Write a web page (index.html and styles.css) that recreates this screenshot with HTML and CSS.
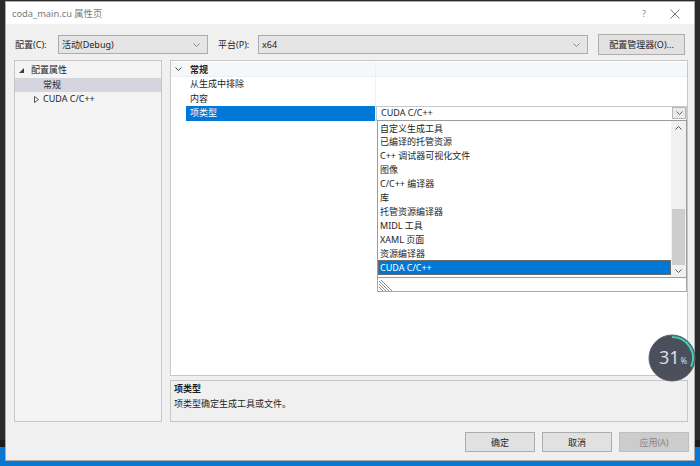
FILE: index.html
```html
<!DOCTYPE html>
<html lang="zh-CN">
<head>
<meta charset="utf-8">
<title>coda_main.cu 属性页</title>
<link rel="stylesheet" href="styles.css">
</head>
<body>
<div class="desktop">
  <div class="desk-top"></div>
  <div class="taskbar"></div>

  <div class="window">
    <div class="titlebar">
      <span class="title">coda_main.cu 属性页</span>
      <span class="tb-btns">
        <span class="help">?</span>
        <svg class="close" width="10" height="10" viewBox="0 0 10 10"><path d="M0.5 0.5 L9.5 9.5 M9.5 0.5 L0.5 9.5" stroke="#7a7a7a" stroke-width="1" fill="none"/></svg>
      </span>
    </div>

    <div class="toolbar">
      <span class="lbl lbl-config">配置(C):</span>
      <div class="combo combo-config">
        <span>活动(Debug)</span>
        <svg class="chev" width="7" height="4" viewBox="0 0 7 4"><polyline points="0.5,0.5 3.5,3.5 6.5,0.5" fill="none" stroke="#8a8a8a" stroke-width="1"/></svg>
      </div>
      <span class="lbl lbl-platform">平台(P):</span>
      <div class="combo combo-platform">
        <span>x64</span>
        <svg class="chev" width="7" height="4" viewBox="0 0 7 4"><polyline points="0.5,0.5 3.5,3.5 6.5,0.5" fill="none" stroke="#8a8a8a" stroke-width="1"/></svg>
      </div>
      <div class="btn btn-mgr">配置管理器(O)...</div>
    </div>

    <div class="main">
      <div class="tree">
        <div class="tree-row lvl0">
          <svg class="tri" width="5" height="5" viewBox="0 0 5 5"><polygon points="5,0 5,5 0,5" fill="#3c3c3c"/></svg>
          <span>配置属性</span>
        </div>
        <div class="tree-row lvl1 selected"><span>常规</span></div>
        <div class="tree-row lvl1 collapsed">
          <svg class="tri-open" width="5" height="7" viewBox="0 0 5 7"><polygon points="0.5,0.5 4.5,3.5 0.5,6.5" fill="none" stroke="#555" stroke-width="1"/></svg>
          <span>CUDA C/C++</span>
        </div>
      </div>

      <div class="right">
        <div class="grid">
          <div class="row header">
            <span class="gutter"><svg width="7" height="4" viewBox="0 0 7 4"><polyline points="0.5,0.5 3.5,3.5 6.5,0.5" fill="none" stroke="#444" stroke-width="1"/></svg></span>
            <span class="name bold">常规</span>
          </div>
          <div class="row">
            <span class="gutter"></span>
            <span class="name">从生成中排除</span>
            <span class="value"></span>
          </div>
          <div class="row">
            <span class="gutter"></span>
            <span class="name">内容</span>
            <span class="value"></span>
          </div>
          <div class="row">
            <span class="gutter"></span>
            <span class="name sel">项类型</span>
            <div class="value edit">
              <span class="edit-text">CUDA C/C++</span>
              <span class="dd-btn"><svg width="7" height="4" viewBox="0 0 7 4"><polyline points="0.5,0.5 3.5,3.5 6.5,0.5" fill="none" stroke="#666" stroke-width="1"/></svg></span>
              <div class="dropdown">
                <div class="dd-list">
                  <div class="dd-items">
                    <div class="dd-item">自定义生成工具</div>
                    <div class="dd-item">已编译的托管资源</div>
                    <div class="dd-item">C++ 调试器可视化文件</div>
                    <div class="dd-item">图像</div>
                    <div class="dd-item">C/C++ 编译器</div>
                    <div class="dd-item">库</div>
                    <div class="dd-item">托管资源编译器</div>
                    <div class="dd-item">MIDL 工具</div>
                    <div class="dd-item">XAML 页面</div>
                    <div class="dd-item">资源编译器</div>
                    <div class="dd-item active">CUDA C/C++</div>
                  </div>
                  <div class="dd-scroll">
                    <svg class="sb-arrow" width="7" height="4" viewBox="0 0 7 4"><polyline points="0.5,3.5 3.5,0.5 6.5,3.5" fill="none" stroke="#555" stroke-width="1"/></svg>
                    <div class="sb-track"><div class="sb-thumb"></div></div>
                    <svg class="sb-arrow" width="7" height="4" viewBox="0 0 7 4"><polyline points="0.5,0.5 3.5,3.5 6.5,0.5" fill="none" stroke="#555" stroke-width="1"/></svg>
                  </div>
                </div>
                <div class="dd-grip">
                  <svg width="14" height="11" viewBox="0 0 14 11">
                    <g stroke="#8a8a8a" stroke-width="1">
                      <line x1="0" y1="1" x2="10" y2="11"/>
                      <line x1="0" y1="4" x2="7" y2="11"/>
                      <line x1="0" y1="7" x2="4" y2="11"/>
                      <line x1="2" y1="0" x2="13" y2="11"/>
                    </g>
                  </svg>
                </div>
              </div>
            </div>
          </div>
        </div>
        <div class="desc">
          <div class="bold">项类型</div>
          <div>项类型确定生成工具或文件。</div>
        </div>
      </div>
    </div>

    <div class="footer">
      <div class="btn">确定</div>
      <div class="btn">取消</div>
      <div class="btn disabled">应用(A)</div>
    </div>
  </div>

  <div class="progress">
    <svg width="48" height="48" viewBox="0 0 48 48">
      <circle cx="24" cy="24" r="23" fill="#4a4f5b" stroke="#5c616c" stroke-width="1"/>
      <path d="M24 3 A21 21 0 0 1 43.1 32.7" fill="none" stroke="#3fd0b2" stroke-width="2"/>
    </svg>
    <span class="pct"><span class="num">31</span><span class="sign">%</span></span>
  </div>
</div>
</body>
</html>
```

FILE: styles.css
```css
* { box-sizing: border-box; }
html, body { margin: 0; padding: 0; }
body {
  width: 700px;
  height: 466px;
  overflow: hidden;
  font-family: "Noto Sans", "Noto Sans CJK SC", sans-serif;
  font-size: 9px;
  color: #1e1e1e;
  background: #262626;
}

.desktop {
  position: relative;
  width: 700px;
  height: 466px;
  display: flex;
  flex-direction: column;
}
.desk-top {
  flex: 1;
  background: linear-gradient(to bottom, #2b2b2b 0, #2b2b2b 440px, #1c1c1c 440px);
}
.taskbar {
  height: 19px;
  background: #0a78d2;
}

/* window */
.window {
  position: absolute;
  left: 5px;
  top: 1px;
  width: 690px;
  height: 460px;
  background: #f0f0f0;
  border: 1px solid #a9a9a9;
  display: flex;
  flex-direction: column;
}
.titlebar {
  height: 22px;
  background: #fff;
  display: flex;
  align-items: center;
  padding: 1px 14px 0 6px;
  line-height: 14px;
}
.title { color: #7a7a7a; font-size: 9.3px; }
.tb-btns {
  margin-left: auto;
  display: flex;
  align-items: center;
  gap: 24px;
}
.help { color: #8a8a8a; font-size: 9px; }

/* toolbar */
.toolbar {
  margin-top: 10px;
  height: 21px;
  display: flex;
  align-items: center;
  padding-left: 9px;
}
.lbl { white-space: nowrap; }
.lbl-config { width: 43px; }
.lbl-platform { width: 40px; margin-left: 10px; }
.combo {
  height: 19px;
  background: #e5e5e5;
  border: 1px solid #acacac;
  display: flex;
  align-items: center;
  padding: 0 7px 0 3px;
}
.combo .chev { margin-left: auto; }
.combo-config { width: 150px; }
.combo-platform { width: 330px; }
.btn {
  height: 20px;
  width: 70px;
  background: #e1e1e1;
  border: 1px solid #adadad;
  display: flex;
  align-items: center;
  justify-content: center;
}
.btn-mgr { width: 87px; height: 21px; margin-left: 10px; }
.btn.disabled { background: #cccccc; border-color: #bfbfbf; color: #838383; }

/* main area */
.main {
  margin-top: 5px;
  height: 362px;
  display: flex;
  gap: 8px;
  padding: 0 6px 0 8px;
}
.tree {
  width: 148px;
  background: #f4f4f4;
  border: 1px solid #c7c7c7;
  padding-top: 2px;
}
.tree-row {
  height: 14.5px;
  line-height: 14.5px;
  display: flex;
  align-items: center;
  white-space: nowrap;
}
.tree-row.lvl0 { padding-left: 4px; }
.tree-row.lvl0 .tri { margin-right: 7px; margin-top: 1px; }
.tree-row.lvl1 { padding-left: 28px; }
.tree-row.collapsed { padding-left: 19px; }
.tree-row.collapsed .tri-open { margin-right: 4px; }
.tree-row.selected { background: #d4d5de; }

.right {
  flex: 1;
  display: flex;
  flex-direction: column;
  gap: 4px;
}
.grid {
  height: 316px;
  background: #fff;
  border: 1px solid #c7c7c7;
  padding-top: 1px;
}
.row {
  display: flex;
  height: 14.5px;
  line-height: 14.5px;
  white-space: nowrap;
}
.row.header {
  height: 15px;
  line-height: 15px;
  background: #f6f7f9;
  border-bottom: 1px solid #eceef2;
}
.gutter {
  width: 15px;
  display: flex;
  align-items: center;
  justify-content: flex-start;
  padding-left: 4px;
}
.name {
  width: 190px;
  padding-left: 4px;
  border-right: 1px solid #f0f0f0;
}
.name.sel { background: #0078d7; color: #fff; }
.bold { font-weight: bold; }
.value { flex: 1; }
.value.edit {
  position: relative;
  display: flex;
  align-items: center;
  border: 1px solid #c9c9c9;
  padding-left: 4px;
}
.dd-btn {
  margin-left: auto;
  width: 14px;
  height: 12px;
  background: #eaeaea;
  border: 1px solid #b8b8b8;
  display: flex;
  align-items: center;
  justify-content: center;
}

/* dropdown popup */
.dropdown {
  position: absolute;
  top: 100%;
  left: 0;
  width: 310px;
  z-index: 5;
}
.dd-list {
  display: flex;
  height: 158px;
  background: #fff;
  border: 1px solid #9c9c9c;
}
.dd-items {
  flex: 1;
  padding-top: 1px;
}
.dd-item {
  height: 13.9px;
  line-height: 13.9px;
  padding-left: 2px;
  white-space: nowrap;
}
.dd-item.active {
  background: #0078d7;
  color: #fff;
  height: 15px;
  line-height: 13px;
  padding-left: 1px;
  border: 1px solid #6b6b6b;
}
.dd-scroll {
  width: 15px;
  background: #f0f0f0;
  display: flex;
  flex-direction: column;
  align-items: center;
  padding: 5px 0 4px;
}
.sb-track {
  flex: 1;
  width: 100%;
  display: flex;
  flex-direction: column;
  justify-content: flex-end;
  padding: 0 1px 4px;
}
.sb-thumb {
  height: 56px;
  background: #cdcdcd;
}
.dd-grip {
  height: 14px;
  background: #fff;
  border: 1px solid #a8a8a8;
  border-top: none;
  padding: 2px 0 0 1px;
  display: flex;
  align-items: flex-end;
}
.dd-grip svg { display: block; }

.desc {
  flex: 1;
  border: 1px solid #c7c7c7;
  padding: 1px 3px 0;
  line-height: 14.5px;
}

/* footer */
.footer {
  display: flex;
  justify-content: flex-end;
  gap: 7px;
  padding: 10px 5px 0 0;
}

/* floating progress widget */
.progress {
  position: absolute;
  left: 648px;
  top: 334px;
  width: 48px;
  height: 48px;
  z-index: 10;
}
.progress svg { position: absolute; left: 0; top: 0; }
.pct {
  position: absolute;
  left: 11px;
  top: 12px;
  color: #dedede;
  font-family: "Noto Sans", sans-serif;
  white-space: nowrap;
}
.pct .num { font-size: 18px; line-height: 22px; }
.pct .sign { font-size: 8px; margin-left: 1px; }
```
